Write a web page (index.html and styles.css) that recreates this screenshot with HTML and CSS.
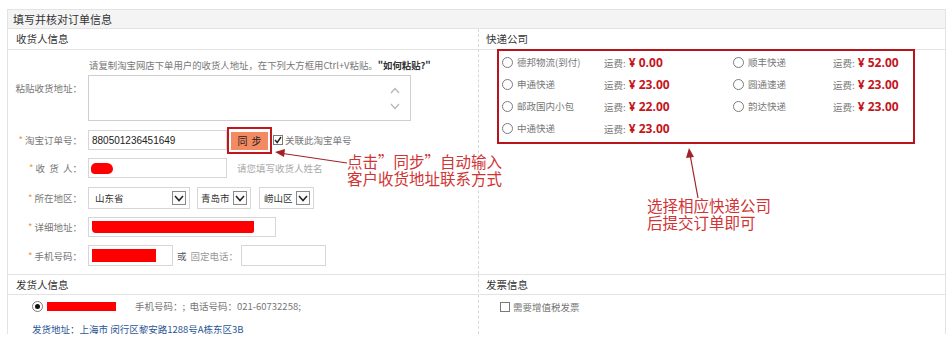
FILE: index.html
```html
<!DOCTYPE html>
<html lang="zh-CN">
<head>
<meta charset="utf-8">
<title>填写并核对订单信息</title>
<link rel="stylesheet" href="styles.css">
</head>
<body>
<div class="panel">
  <div class="panel-title">填写并核对订单信息</div>
  <div class="grid">
    <section class="sec sec-left">
      <div class="sec-head">收货人信息</div>
      <div class="form">
        <div class="hint-line">请复制淘宝网店下单用户的收货人地址，在下列大方框用Ctrl+V粘贴。<b>"如何粘贴?"</b></div>
        <div class="row row-ta">
          <span class="lbl lbl-top">粘贴收货地址：</span>
          <div class="textarea">
            <div class="scroll">
              <svg width="10" height="7" viewBox="0 0 10 7"><polyline points="1,6 5,1.5 9,6" fill="none" stroke="#b5b5b5" stroke-width="1.2"/></svg>
              <svg width="10" height="7" viewBox="0 0 10 7"><polyline points="1,1 5,5.5 9,1" fill="none" stroke="#b5b5b5" stroke-width="1.2"/></svg>
            </div>
          </div>
        </div>
        <div class="row row-order">
          <span class="lbl"><i class="star">*</i> 淘宝订单号：</span>
          <div class="input w139 val">880501236451649</div>
          <div class="sync-frame"><span class="sync-btn">同步</span></div>
          <span class="chk checked"><svg width="8" height="8" viewBox="0 0 8 8"><polyline points="1,4 3.2,6.5 7,1" fill="none" stroke="#222" stroke-width="1.4"/></svg></span>
          <span class="chk-text">关联此淘宝单号</span>
        </div>
        <div class="row">
          <span class="lbl"><i class="star">*</i> 收&nbsp;&nbsp;货&nbsp;&nbsp;人：</span>
          <div class="input w139"><span class="redact r-name"></span></div>
          <span class="tip">请您填写收货人姓名</span>
        </div>
        <div class="row row-area">
          <span class="lbl"><i class="star">*</i> 所在地区：</span>
          <div class="select s1"><span>山东省</span><span class="arr"><svg width="10" height="7" viewBox="0 0 10 7"><polyline points="1,1 5,5.5 9,1" fill="none" stroke="#222" stroke-width="1.5"/></svg></span></div>
          <div class="select s2"><span>青岛市</span><span class="arr"><svg width="10" height="7" viewBox="0 0 10 7"><polyline points="1,1 5,5.5 9,1" fill="none" stroke="#222" stroke-width="1.5"/></svg></span></div>
          <div class="select s3"><span>崂山区</span><span class="arr"><svg width="10" height="7" viewBox="0 0 10 7"><polyline points="1,1 5,5.5 9,1" fill="none" stroke="#222" stroke-width="1.5"/></svg></span></div>
        </div>
        <div class="row">
          <span class="lbl"><i class="star">*</i> 详细地址：</span>
          <div class="input w188"><span class="redact r-addr"></span></div>
        </div>
        <div class="row row-mobile">
          <span class="lbl"><i class="star">*</i> 手机号码：</span>
          <div class="input w85 h21"><span class="redact r-mob"></span></div>
          <span class="or">或</span><span class="tel-lbl">固定电话：</span>
          <div class="input w85 h21"></div>
        </div>
      </div>
    </section>

    <section class="sec sec-right">
      <div class="sec-head sec-head-r">快递公司</div>
      <div class="express">
        <div class="exp-item"><span class="radio"></span>德邦物流(到付)</div>
        <div class="exp-fee">运费: <b class="price">¥ 0.00</b></div>
        <div class="exp-item"><span class="radio"></span>顺丰快递</div>
        <div class="exp-fee">运费: <b class="price">¥ 52.00</b></div>

        <div class="exp-item"><span class="radio"></span>申通快递</div>
        <div class="exp-fee">运费: <b class="price">¥ 23.00</b></div>
        <div class="exp-item"><span class="radio"></span>圆通速递</div>
        <div class="exp-fee">运费: <b class="price">¥ 23.00</b></div>

        <div class="exp-item"><span class="radio"></span>邮政国内小包</div>
        <div class="exp-fee">运费: <b class="price">¥ 22.00</b></div>
        <div class="exp-item"><span class="radio"></span>韵达快递</div>
        <div class="exp-fee">运费: <b class="price">¥ 23.00</b></div>

        <div class="exp-item"><span class="radio"></span>中通快递</div>
        <div class="exp-fee">运费: <b class="price">¥ 23.00</b></div>
      </div>
    </section>

    <section class="sec sec-left sec-bottom">
      <div class="sec-head">发货人信息</div>
      <div class="sender">
        <div class="sender-line"><span class="radio on"></span><span class="redact r-sender"></span><span class="sender-phone">手机号码：;&nbsp; 电话号码：021-60732258;</span></div>
        <div class="sender-addr">发货地址：上海市 闵行区黎安路1288号A栋东区3B</div>
      </div>
    </section>

    <section class="sec sec-right sec-bottom">
      <div class="sec-head sec-head-r">发票信息</div>
      <div class="invoice">
        <span class="chk"></span><span class="chk-text">需要增值税发票</span>
      </div>
    </section>
  </div>
</div>

<svg class="arrows" width="950" height="341" viewBox="0 0 950 341">
  <line x1="347" y1="163" x2="283" y2="153.5" stroke="#a3222a" stroke-width="1.2"/>
  <polygon points="275,152 285,149 284,157" fill="#a3222a"/>
  <line x1="698" y1="198" x2="690.5" y2="157" stroke="#a3222a" stroke-width="1.2"/>
  <polygon points="689,148 686,158 694,157" fill="#a3222a"/>
</svg>
<div class="note note1"><p>点击”同步”自动输入</p><p>客户收货地址联系方式</p></div>
<div class="note note2"><p>选择相应快递公司</p><p>后提交订单即可</p></div>
</body>
</html>
```

FILE: styles.css
```css
* { box-sizing: border-box; margin: 0; padding: 0; }
body {
  position: relative;
  width: 950px;
  height: 341px;
  overflow: hidden;
  background: #fff;
  font-family: "Noto Sans CJK SC", "Microsoft YaHei", sans-serif;
  font-size: 9.5px;
  color: #6f6f6f;
}
.panel {
  margin: 9px 0 0 7px;
  width: 939px;
  border: 1px solid #e3e3e3;
  border-bottom: none;
}
.panel-title {
  height: 19px;
  line-height: 18px;
  padding-left: 5px;
  background: #f4f4f4;
  border-bottom: 1px solid #e3e3e3;
  font-size: 11px;
  color: #333;
}
.grid {
  display: grid;
  grid-template-columns: 471px 466px;
  grid-template-rows: 245px 60px;
}
.sec-left { border-right: 1px dashed #d8d8d8; }
.sec-bottom { border-top: 1px solid #e3e3e3; }
.sec-head {
  height: 21px;
  line-height: 20px;
  padding-left: 8px;
  border-bottom: 1px solid #e3e3e3;
  font-size: 10.5px;
  color: #333;
}
.sec-bottom .sec-head { height: 20px; line-height: 19px; }
.sec-head-r { padding-left: 7px; }

/* receiver form */
.form {
  display: flex;
  flex-direction: column;
  gap: 8px;
  padding-top: 8px;
}
.hint-line {
  padding-left: 81px;
  line-height: 14px;
  margin-bottom: -5px;
  color: #777;
  font-size: 9.4px;
}
.hint-line b { color: #333; font-weight: bold; }
.row {
  display: flex;
  align-items: center;
}
.row-ta { align-items: flex-start; margin-bottom: 1px; }
.row-area { margin-top: 1px; }
.lbl {
  width: 80px;
  flex: none;
  padding-right: 6px;
  text-align: right;
  color: #777;
  white-space: nowrap;
}
.lbl-top { padding-top: 6px; }
.star { font-style: normal; color: #f0903c; }
.textarea {
  width: 323px;
  height: 46px;
  border: 1px solid #cfcfcf;
  display: flex;
  justify-content: flex-end;
}
.scroll {
  width: 20px;
  padding-top: 11px;
  display: flex;
  flex-direction: column;
  gap: 9px;
}
.input {
  height: 20px;
  border: 1px solid #d6d6d6;
  display: flex;
  align-items: center;
  padding-left: 2px;
  flex: none;
}
.h21 { height: 21px; }
.w139 { width: 139px; }
.w188 { width: 188px; }
.w85 { width: 85px; }
.val {
  font-family: "Liberation Sans", Arial, sans-serif;
  font-size: 10px;
  color: #222;
  padding-left: 3px;
}
.sync-frame {
  margin: -4px 0 -4px 0;
  width: 45px;
  height: 27px;
  border: 2px solid #c0171e;
  padding: 3px 0 0 2px;
}
.sync-btn {
  display: block;
  width: 37px;
  height: 18px;
  line-height: 18px;
  background: #f48a62;
  color: #222;
  text-align: center;
  font-size: 10px;
  letter-spacing: 4px;
  text-indent: 4px;
}
.chk {
  width: 10px;
  height: 10px;
  border: 1px solid #7a7a7a;
  background: #fff;
  display: inline-flex;
  align-items: center;
  justify-content: center;
  flex: none;
}
.row-order .chk { margin-left: 1px; }
.chk-text { margin-left: 2px; color: #777; }
.tip { margin-left: 10px; color: #aaa; }
.redact { display: block; background: #ff0000; }
.r-name { width: 22px; height: 11px; border-radius: 5px 6px 5px 4px; }
.r-addr { width: 162px; height: 12px; margin-left: 1px; border-radius: 0 0 2px 4px; }
.r-mob { width: 64px; height: 13px; margin-left: 1px; }
.select {
  height: 22px;
  border: 1px solid #d6d6d6;
  display: flex;
  align-items: center;
  justify-content: space-between;
  color: #333;
  flex: none;
}
.select .arr {
  width: 14px;
  height: 14px;
  border: 1px solid #8a8a8a;
  background: #fbfbfb;
  display: flex;
  align-items: center;
  justify-content: center;
}
.s1 { width: 102px; padding: 0 3px 0 6px; }
.s2 { width: 54px; margin-left: 7px; padding: 0 3px 0 3px; }
.s3 { width: 55px; margin-left: 8px; padding: 0 3px 0 4px; }
.or { margin-left: 4px; color: #555; }
.tel-lbl { margin-left: 4px; width: 50px; color: #999; }

/* express */
.express {
  margin: -1px 0 0 18px;
  width: 418px;
  height: 95px;
  border: 2px solid #b8141c;
  padding: 0 0 0 3px;
  display: grid;
  grid-template-columns: 102px 129px 100px 1fr;
  grid-auto-rows: 22px;
  align-items: center;
}
.exp-item { display: flex; align-items: center; color: #777; }
.radio {
  width: 11px;
  height: 11px;
  border: 1px solid #7c7c7c;
  border-radius: 50%;
  background: #fff;
  margin-right: 4px;
  flex: none;
  display: inline-flex;
  align-items: center;
  justify-content: center;
}
.radio.on::after {
  content: "";
  width: 5px;
  height: 5px;
  border-radius: 50%;
  background: #111;
}
.exp-fee { color: #777; }
.price {
  font-family: "Open Sans", "Liberation Sans", sans-serif;
  font-size: 12px;
  font-weight: 700;
  color: #c4161c;
  margin-left: 1px;
}

/* sender */
.sender { padding: 1px 0 0 24px; }
.sender-line { display: flex; align-items: center; height: 20px; }
.sender-line .radio { margin-right: 4px; }
.r-sender { width: 69px; height: 9px; }
.sender-phone { margin-left: 19px; color: #777; }
.sender-addr { margin-top: 3px; line-height: 20px; color: #2b5694; }

.invoice { display: flex; align-items: center; height: 22px; padding-left: 21px; margin-top: 1px; }
.invoice .chk-text { margin-left: 3px; }

/* annotations */
.arrows { position: absolute; left: 0; top: 0; pointer-events: none; }
.note {
  position: absolute;
  font-size: 15.5px;
  line-height: 17px;
  color: #d03434;
  white-space: nowrap;
}
.note p { height: 17px; }
.note1 { left: 347px; top: 153px; }
.note2 { left: 647px; top: 197px; }
```
